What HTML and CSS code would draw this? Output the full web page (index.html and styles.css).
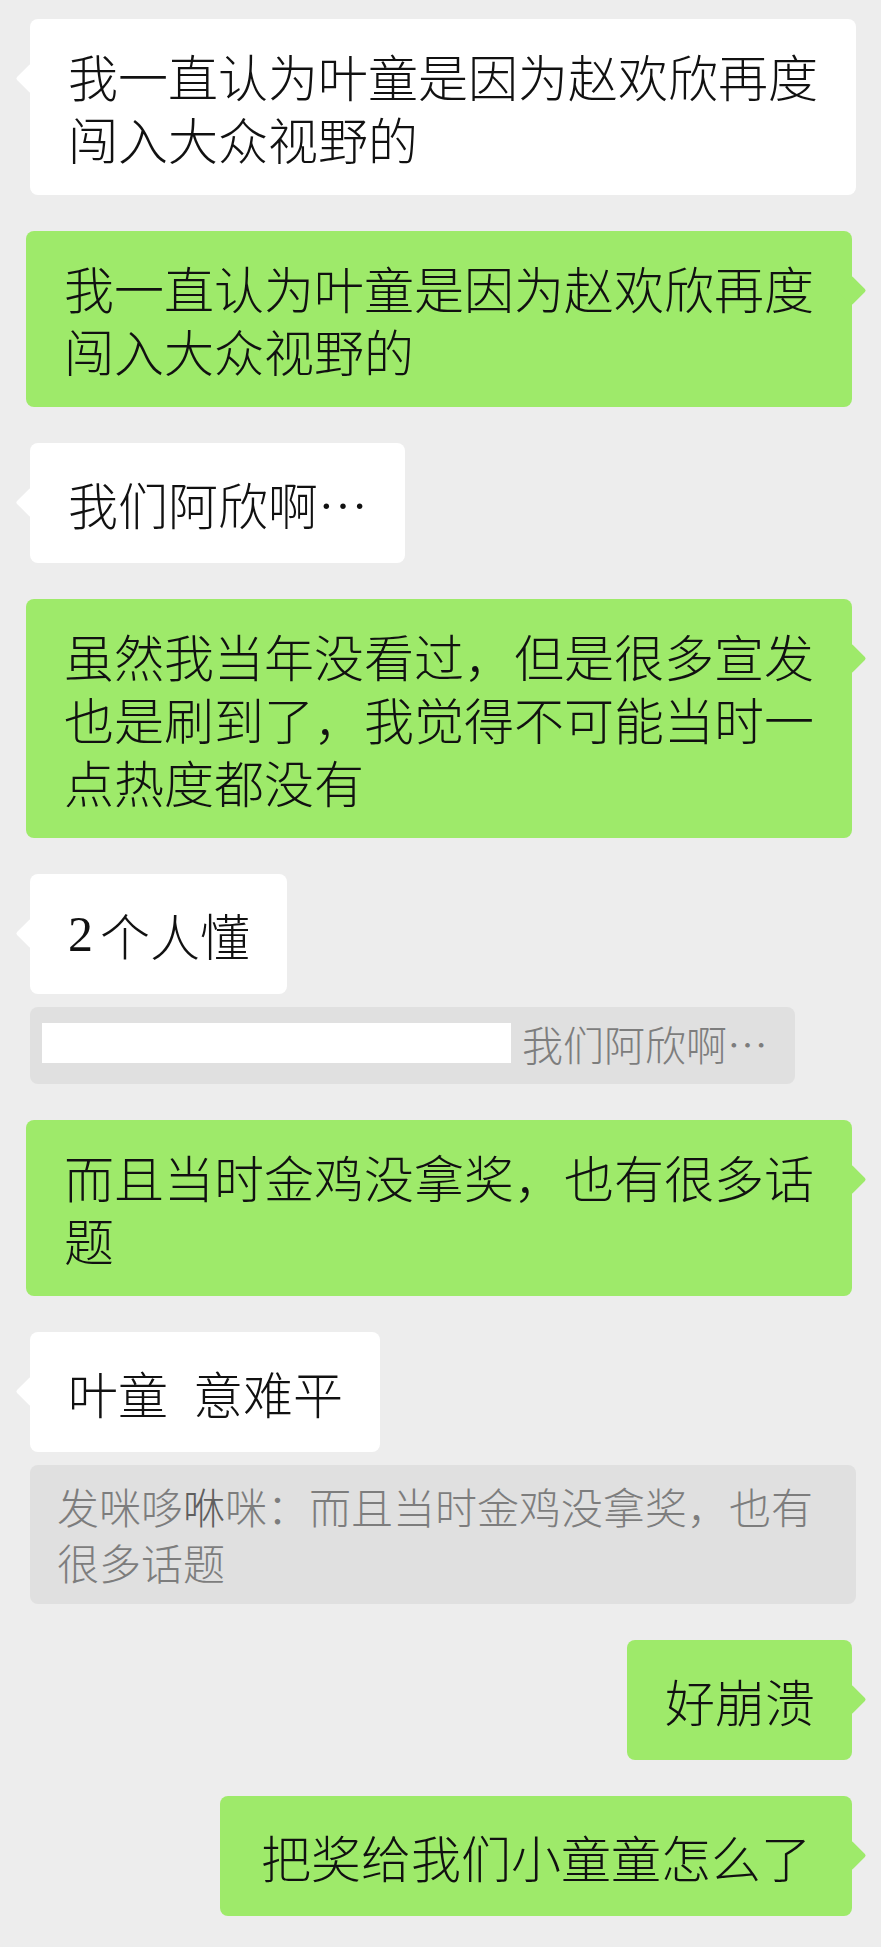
FILE: index.html
```html
<!DOCTYPE html>
<html>
<head>
    <meta charset="utf-8"/>
    <title>聊天记录</title>
    <meta name="viewport" content="width=device-width,initial-scale=1"/>
    <link rel="stylesheet" href="styles.css">
</head>
<body>
<div class="chat">
    <!--对方-->
    <div class="msg left">
        <div class="bubble">我一直认为叶童是因为赵欢欣再度闯入大众视野的</div>
    </div>
    <!--自己-->
    <div class="msg right">
        <div class="bubble">我一直认为叶童是因为赵欢欣再度闯入大众视野的</div>
    </div>
    <div class="msg left">
        <div class="bubble">我们阿欣啊…</div>
    </div>
    <div class="msg right">
        <div class="bubble">虽然我当年没看过，但是很多宣发也是刷到了，我觉得不可能当时一点热度都没有</div>
    </div>
    <div class="msg left">
        <div class="bubble"><span class="num">2</span>个人懂</div>
        <!--引用-->
        <div class="quote">
            <span class="masked"></span>
            <span>我们阿欣啊…</span>
        </div>
    </div>
    <div class="msg right">
        <div class="bubble">而且当时金鸡没拿奖，也有很多话题</div>
    </div>
    <div class="msg left">
        <div class="bubble">叶童&ensp;意难平</div>
        <div class="quote long">发咪哆<span class="fallback">咻</span>咪：而且当时金鸡没拿奖，也有很多话题</div>
    </div>
    <div class="msg right">
        <div class="bubble">好崩溃</div>
    </div>
    <div class="msg right">
        <div class="bubble wide">把奖给我们小童童怎么了</div>
    </div>
</div>
</body>
</html>
```

FILE: styles.css
```css
html {
    background: #ededed;
}

body {
    margin: 0;
    font-family: "Noto Sans CJK SC", sans-serif;
    color: #111;
}

.chat {
    display: flex;
    flex-direction: column;
    gap: 36px;
    padding: 19px 0 33px;
}

.msg {
    display: flex;
    flex-direction: column;
    gap: 13px;
}

.msg.left {
    align-items: flex-start;
    padding-left: 30px;
}

.msg.right {
    align-items: flex-end;
    padding-right: 29px;
}

.bubble {
    position: relative;
    display: flex;
    align-items: center;
    box-sizing: border-box;
    max-width: 826px;
    min-height: 120px;
    padding: 25px 37px 25px 38px;
    border-radius: 8px;
    font-size: 50px;
    line-height: 63px;
    font-weight: 300;
    background: #fff;
}

.right .bubble {
    background: #9eea6a;
}

.bubble.wide {
    padding-left: 41px;
    padding-right: 41px;
}

/* 小三角 */
.bubble::before {
    content: "";
    position: absolute;
    top: 49px;
    width: 21px;
    height: 21px;
    border-radius: 2px;
    background: inherit;
    transform: rotate(45deg);
}

.left .bubble::before {
    left: -10px;
}

.right .bubble::before {
    right: -10px;
}

.num {
    font-family: "Liberation Serif", serif;
    margin-right: 7px;
}

.quote {
    display: flex;
    align-items: center;
    gap: 11px;
    padding: 16px 27px 21px 12px;
    border-radius: 8px;
    background: #e0e0e0;
    color: #7d7d7d;
    font-size: 41px;
    line-height: 40px;
    font-weight: 300;
}

.masked {
    width: 469px;
    height: 40px;
    background: #fff;
}

.quote.long {
    display: block;
    box-sizing: border-box;
    max-width: 826px;
    padding: 13px 27px 14px 27px;
    font-size: 42px;
    line-height: 56px;
}

.fallback {
    color: #5e5e5e;
}
```
